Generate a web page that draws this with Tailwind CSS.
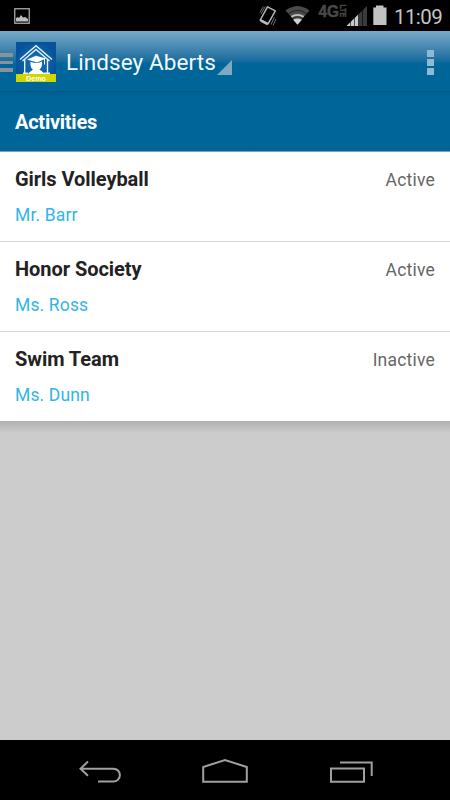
<!DOCTYPE html>
<html lang="en">
<head>
  <meta charset="UTF-8" />
  <meta name="viewport" content="width=device-width, initial-scale=1.0" />
  <title>Activities</title>
  <script src="https://cdn.jsdelivr.net/npm/@tailwindcss/browser@4"></script>
</head>
<body class="bg-black">
  <div class="w-[450px] h-[800px] flex flex-col overflow-hidden bg-[#cccccc] font-[Roboto,sans-serif]">

    <!-- Status Bar -->
    <div class="h-[31px] shrink-0 bg-black flex items-start justify-between">
      <svg class="ml-[14px] mt-2" width="16" height="16" viewBox="0 0 16 16">
        <rect x="0.75" y="0.75" width="14.5" height="14.5" fill="none" stroke="#a8a8a8" stroke-width="1.3" />
        <path d="M2 13.500V10L4 9L5 10L7 7L9 9.5L11 9L14 11V13.500Z" fill="#bdbdbd" />
      </svg>
      <div class="flex items-start pr-[7px]">
        <!-- Vibrate -->
        <svg width="20" height="31" viewBox="258 0 20 31" fill="none">
          <path d="M267.500 6.800L275.300 10.800L268 24L260.200 20Z" stroke="#b8b8b8" stroke-width="1.5" stroke-linejoin="round" />
          <path d="M260.800 20.500L267.800 24.200" stroke="#b8b8b8" stroke-width="2.6" />
          <path d="M265.300 6.500L261 14M263.300 6.500L260 12.500M274.500 17L271 24.500M276 19L273 25.500" stroke="#707070" />
        </svg>
        <!-- Wifi -->
        <svg class="ml-[7px]" width="25" height="31" viewBox="285 0 25 31">
          <path d="M297.500 24L285.500 10.500Q297.500 1.500 309.500 10.500Z" fill="#4a4a4a" />
          <path d="M288.500 13.500Q297.500 7.500 306.500 13.500" fill="none" stroke="#1c1c1c" stroke-width="0.9" />
          <path d="M291.300 16.800Q297.500 13 303.700 16.800" fill="none" stroke="#c4c4c4" stroke-width="1.800" />
          <path d="M292 18.900Q297.500 15.500 303 18.900" fill="none" stroke="#333" stroke-width="0.8" />
          <path d="M297.500 24.800L293 19.800Q297.500 17 302 19.800Z" fill="#d0d0d0" />
        </svg>
        <!-- Network type and signal -->
        <svg class="ml-[8px]" width="49" height="31" viewBox="318 0 49 31">
          <text x="318.500" y="16.500" fill="#484848" stroke="#484848" stroke-width="0.5" font-family="Liberation Sans" font-weight="bold" font-size="16" textLength="20.500" lengthAdjust="spacingAndGlyphs">4G</text>
          <text transform="translate(340 4.500) rotate(90)" fill="#484848" stroke="#484848" stroke-width="0.4" font-family="Liberation Sans" font-weight="bold" font-size="8.500" textLength="12.500" lengthAdjust="spacingAndGlyphs">LTE</text>
          <path d="M367 6V26H346.500Z" fill="#3a3a3a" />
          <path d="M358.500 14.300V26H346.500Z" fill="#cacaca" />
          <path d="M350.500 20V26M354.500 17V26M358.500 12V26M362.500 8V26" stroke="#000" stroke-width="0.6" />
        </svg>
        <!-- Battery -->
        <svg class="ml-[6px]" width="14" height="31" viewBox="373 0 14 31">
          <path d="M376 5.500H383.500V7.500H386.500V25H373.300V7.500H376Z" fill="#c2c2c2" />
        </svg>
        <span class="ml-[7px] w-[49px] text-[20.500px] leading-[34px] tracking-[-0.600px] text-[#c4c4c4] whitespace-nowrap">11:09</span>
      </div>
    </div>

    <!-- Action Bar -->
    <div class="h-[61px] shrink-0 flex items-center pt-[2px] bg-linear-to-b from-[#76aac8] from-0% via-[#00669a] via-55% to-[#00669a] border-b border-[#005a87]">
      <div class="w-[13px] flex flex-col gap-1 pt-[1px]">
        <div class="h-[3.500px] bg-[#86929c]"></div>
        <div class="h-[3.500px] bg-[#86929c]"></div>
        <div class="h-[3.500px] bg-[#86929c]"></div>
      </div>
      <svg class="ml-[3px]" width="40" height="40" viewBox="0 0 40 40">
        <defs>
          <radialGradient id="logoBg">
            <stop offset="0" stop-color="#1675bd" />
            <stop offset="1" stop-color="#07539b" />
          </radialGradient>
        </defs>
        <rect width="40" height="40" fill="url(#logoBg)" />
        <!-- House -->
        <path d="M4 17.500L20 3.700L36 17.500M6.500 19L20 7.500L33.500 19" fill="none" stroke="#e6f2fa" stroke-width="1.400" />
        <path d="M8.700 17.500V31.500M31.500 17.500V31.500M7 31.300H12M28 31.300H34" stroke="#e6f2fa" stroke-width="1.400" />
        <!-- Graduate -->
        <path d="M11 17.500L20 13.800L30 16.500L21 20.500Z" fill="#fff" />
        <path d="M14.500 19.800Q20.500 22.500 26 19.500V23Q25.500 26 23.500 27.500L28 31V32H12.500V31L17 27.500Q14.700 26 14.500 23Z" fill="#fff" />
        <path d="M28.500 17V22.500" stroke="#fff" />
        <rect y="32" width="40" height="8" fill="#cfd600" />
        <text x="20" y="38.500" text-anchor="middle" fill="#fff" font-family="Liberation Sans" font-weight="bold" font-size="7.500" textLength="20" lengthAdjust="spacingAndGlyphs">Demo</text>
      </svg>
      <div class="ml-[10px] flex items-end">
        <span class="w-[151px] text-[22.500px] leading-[28px] tracking-[0.080px] text-[#f3f8fc] whitespace-nowrap">Lindsey Aberts</span>
        <svg class="mb-[1px]" width="15" height="15" viewBox="0 0 15 15">
          <path d="M15 0V15H0Z" fill="#7fa9bf" />
        </svg>
      </div>
      <div class="ml-auto mr-[16px] flex flex-col gap-[2px]">
        <div class="size-[7px] bg-[#8dbbd4]"></div>
        <div class="size-[7px] bg-[#8dbbd4]"></div>
        <div class="size-[7px] bg-[#8dbbd4]"></div>
      </div>
    </div>

    <!-- Section Title -->
    <div class="h-[60px] shrink-0 bg-linear-to-b from-[#005f90] to-[#00669a] to-10% border-b border-[#7ba0c4] px-[15px]">
      <h1 class="text-[20px] leading-[61px] font-bold tracking-[-0.250px] text-white">Activities</h1>
    </div>

    <!-- Activity List -->
    <div id="activityList" class="h-[269px] bg-white divide-y divide-[#d4d4d4] shrink-0"></div>
    <div class="flex-1 bg-linear-to-b from-[#b0b0b0] to-[#cccccc] to-[12px]"></div>

    <!-- Navigation Bar -->
    <div class="h-[60px] shrink-0 bg-black">
      <svg width="450" height="60" viewBox="0 740 450 60" fill="none" stroke="#a0a0a0" stroke-width="2">
        <path d="M88 761.500L80.500 768.700L88 775.800M80.500 768.700H113.500A6.400 6.400 0 0 1 113.500 781.500H98" />
        <path d="M203.200 767L225 760L246.800 767V781.700H203.200Z" />
        <path d="M331 768.500H364V781.700H331ZM340 762.500H371.700V776" />
      </svg>
    </div>
  </div>

  <script>
    const activities = [
      { name: 'Girls Volleyball', teacher: 'Mr. Barr', status: 'Active' },
      { name: 'Honor Society', teacher: 'Ms. Ross', status: 'Active' },
      { name: 'Swim Team', teacher: 'Ms. Dunn', status: 'Inactive' }
    ];

    document.getElementById('activityList').innerHTML = activities.map(activity => `
      <div class="h-[90px] last:h-[89px] px-[15px] pt-[12px]">
        <div class="flex items-center justify-between">
          <h2 class="text-[20px] leading-[28px] font-bold tracking-[-0.050px] text-[#222222]">${activity.name}</h2>
          <span class="text-[17.500px] leading-[28px] pt-[2px] tracking-[0.200px] text-[#666666]">${activity.status}</span>
        </div>
        <p class="mt-[7px] text-[17.500px] leading-[28px] tracking-[0.150px] text-[#33b5e5]">${activity.teacher}</p>
      </div>
    `).join('');
  </script>
</body>
</html>
